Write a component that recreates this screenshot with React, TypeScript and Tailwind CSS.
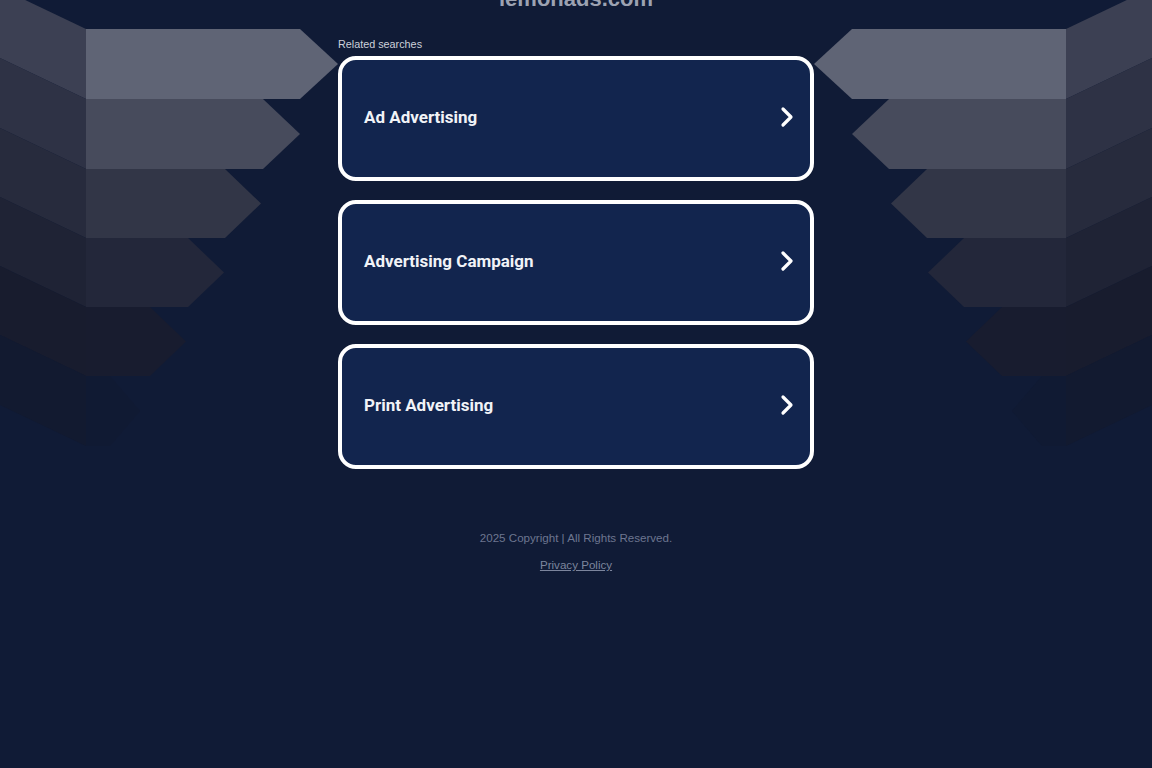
import { Fragment } from 'react'

const searches = ['Ad Advertising', 'Advertising Campaign', 'Print Advertising']

// bands of the faceted background: top, bottom, rect right edge, tip, colours
const bands = [
  { y0: 29, y1: 99, r: 300, t: 338, fill: '#5f6475', face: '#3c4053' },
  { y0: 99, y1: 169, r: 263, t: 300, fill: '#474b5c', face: '#2e3245' },
  { y0: 169, y1: 238, r: 225, t: 261, fill: '#323647', face: '#272b3d' },
  { y0: 238, y1: 307, r: 188, t: 224, fill: '#23273a', face: '#1f2335' },
  { y0: 307, y1: 376, r: 150, t: 186, fill: '#181c2f', face: '#181c2e' },
  { y0: 376, y1: 446, r: 110, t: 140, fill: '#101a33', face: '#121a30' },
]

function Facets() {
  return (
    <g>
      {bands.map((b) => {
        const mid = (b.y0 + b.y1) / 2
        return (
          <Fragment key={b.y0}>
            <polygon
              points={`0,${b.y0 - 41} 86,${b.y0} 86,${b.y1} 0,${b.y1 - 41}`}
              fill={b.face}
            />
            <polygon
              points={`86,${b.y0} ${b.r},${b.y0} ${b.t},${mid} ${b.r},${b.y1} 86,${b.y1}`}
              fill={b.fill}
            />
          </Fragment>
        )
      })}
    </g>
  )
}

function Chevron() {
  return (
    <svg width="14" height="22" viewBox="0 0 14 22" fill="none">
      <path d="M3 3 L11 11 L3 19" stroke="white" strokeWidth="3.2" strokeLinecap="round" strokeLinejoin="round" />
    </svg>
  )
}

export default function App() {
  return (
    <div className="relative min-h-screen overflow-hidden bg-[#101b36] font-['Liberation_Sans',Arial,sans-serif]">
      <svg className="absolute left-0 top-0" width="1152" height="768" viewBox="0 0 1152 768">
        <Facets />
        <g transform="translate(1152,0) scale(-1,1)">
          <Facets />
        </g>
      </svg>

      <div className="relative mx-auto w-[476px]">
        <div className="mt-[-14px] text-center text-[22px] font-bold leading-[25px] text-[#9ca2b2]">
          lemonads.com
        </div>
        <div className="mt-[27px] text-[10.8px] leading-[13px] text-[#cdd1da]">Related searches</div>

        <div className="mt-[5px] flex flex-col gap-[19px]">
          {searches.map((s) => (
            <a
              key={s}
              href="#"
              className="flex h-[125px] items-center justify-between rounded-[18px] border-4 border-white bg-[#12254e] pb-[3px] pl-[22px] pr-[16px]"
            >
              <span className="font-['Roboto',Arial,sans-serif] text-[17px] font-bold leading-[20px] text-[#f1f3f7]">{s}</span>
              <Chevron />
            </a>
          ))}
        </div>

        <div className="mt-[62px] text-center text-[11.6px] leading-[14px] text-[#6d7690]">
          2025 Copyright | All Rights Reserved.
        </div>
        <div className="mt-[13px] text-center text-[11.6px] leading-[14px]">
          <a href="#" className="text-[#7c859d] underline">Privacy Policy</a>
        </div>
      </div>
    </div>
  )
}
